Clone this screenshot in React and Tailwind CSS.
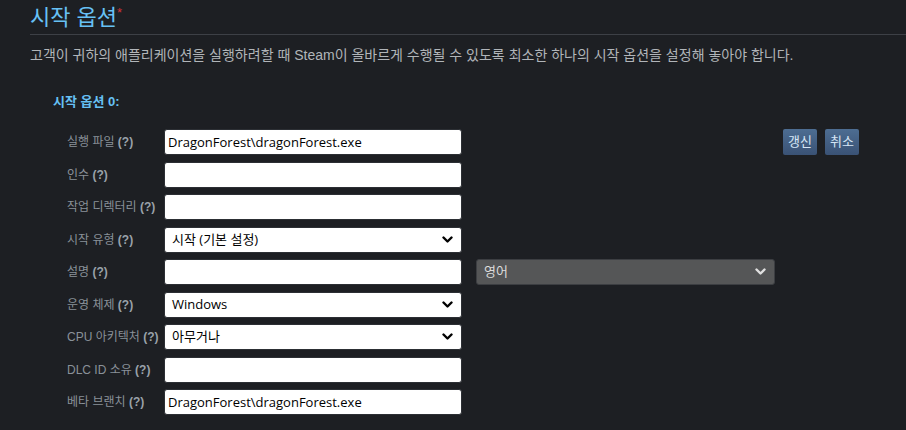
const font = { fontFamily: '"Liberation Sans", "Noto Sans CJK KR", sans-serif' }
const fieldFont = { fontFamily: '"Open Sans", "Noto Sans CJK KR", sans-serif' }

function Chevron({ color = '#000' }) {
  return (
    <svg width="11" height="8" viewBox="0 0 11 8" className="shrink-0">
      <path d="M1.5 1.5 L5.5 5.5 L9.5 1.5" fill="none" stroke={color} strokeWidth="2.4" strokeLinecap="round" strokeLinejoin="round" />
    </svg>
  )
}

function TextBox({ value = '' }) {
  return (
    <input
      readOnly
      value={value}
      className="w-[298px] h-[26px] bg-white rounded-[3px] border border-[#2c2f34] px-[3px] text-[13px] text-black outline-none"
      style={fieldFont}
    />
  )
}

function SelectBox({ value, dark = false, width = 'w-[298px]' }) {
  return (
    <div
      className={`${width} h-[26px] rounded-[3px] border flex items-center justify-between pl-[7px] pr-[8px] text-[13px] ${
        dark ? 'bg-[#555657] border-[#3c3e42] text-[#dcdcdc]' : 'bg-white border-[#2c2f34] text-black'
      }`}
      style={fieldFont}
    >
      <span>{value}</span>
      <Chevron color={dark ? '#e0e0e0' : '#000'} />
    </div>
  )
}

function Row({ label, children, extra }) {
  return (
    <div className="flex items-center h-[26px]">
      <div className="w-[111px] shrink-0 pl-[14px] text-[12px] text-[#8a9199] whitespace-nowrap">
        {label} <span className="font-bold text-[#9aa2aa]">(?)</span>
      </div>
      {children}
      {extra}
    </div>
  )
}

export default function App() {
  return (
    <div className="w-[906px] h-[430px] overflow-hidden bg-[#1d1f23]" style={font}>
      <div className="pl-[30px] pt-[3px]">
        <h2 className="text-[22px] leading-[30px] text-[#67c1f5] border-b border-[#3d4046] pb-[1px]">
          시작 옵션<sup className="text-[#d0343a] text-[13px] -top-[8px]">*</sup>
        </h2>
        <p className="mt-[11px] text-[14px] leading-[18px] text-[#b1b5b9]">
          고객이 귀하의 애플리케이션을 실행하려할 때 Steam이 올바르게 수행될 수 있도록 최소한 하나의 시작 옵션을 설정해 놓아야 합니다.
        </p>
      </div>

      <div className="pl-[53px] mt-[30px]">
        <div className="text-[13px] leading-[16px] font-bold text-[#67c1f5]">시작 옵션 0:</div>

        <div className="mt-[19px] flex flex-col gap-[6.5px]">
          <Row
            label="실행 파일"
            extra={
              <div className="flex gap-[8px] ml-[321px]">
                <button className="w-[34px] h-[26px] rounded-[2px] bg-gradient-to-b from-[#4d6d92] to-[#3a5275] text-[13px] text-[#d6e6f6]">갱신</button>
                <button className="w-[34px] h-[26px] rounded-[2px] bg-gradient-to-b from-[#4d6d92] to-[#3a5275] text-[13px] text-[#d6e6f6]">취소</button>
              </div>
            }
          >
            <TextBox value="DragonForest\dragonForest.exe" />
          </Row>
          <Row label="인수">
            <TextBox />
          </Row>
          <Row label="작업 디렉터리">
            <TextBox />
          </Row>
          <Row label="시작 유형">
            <SelectBox value="시작 (기본 설정)" />
          </Row>
          <Row label="설명" extra={<div className="ml-[14px]"><SelectBox value="영어" dark width="w-[299px]" /></div>}>
            <TextBox />
          </Row>
          <Row label="운영 체제">
            <SelectBox value="Windows" />
          </Row>
          <Row label="CPU 아키텍처">
            <SelectBox value="아무거나" />
          </Row>
          <Row label="DLC ID 소유">
            <TextBox />
          </Row>
          <Row label="베타 브랜치">
            <TextBox value="DragonForest\dragonForest.exe" />
          </Row>
        </div>
      </div>
    </div>
  )
}
